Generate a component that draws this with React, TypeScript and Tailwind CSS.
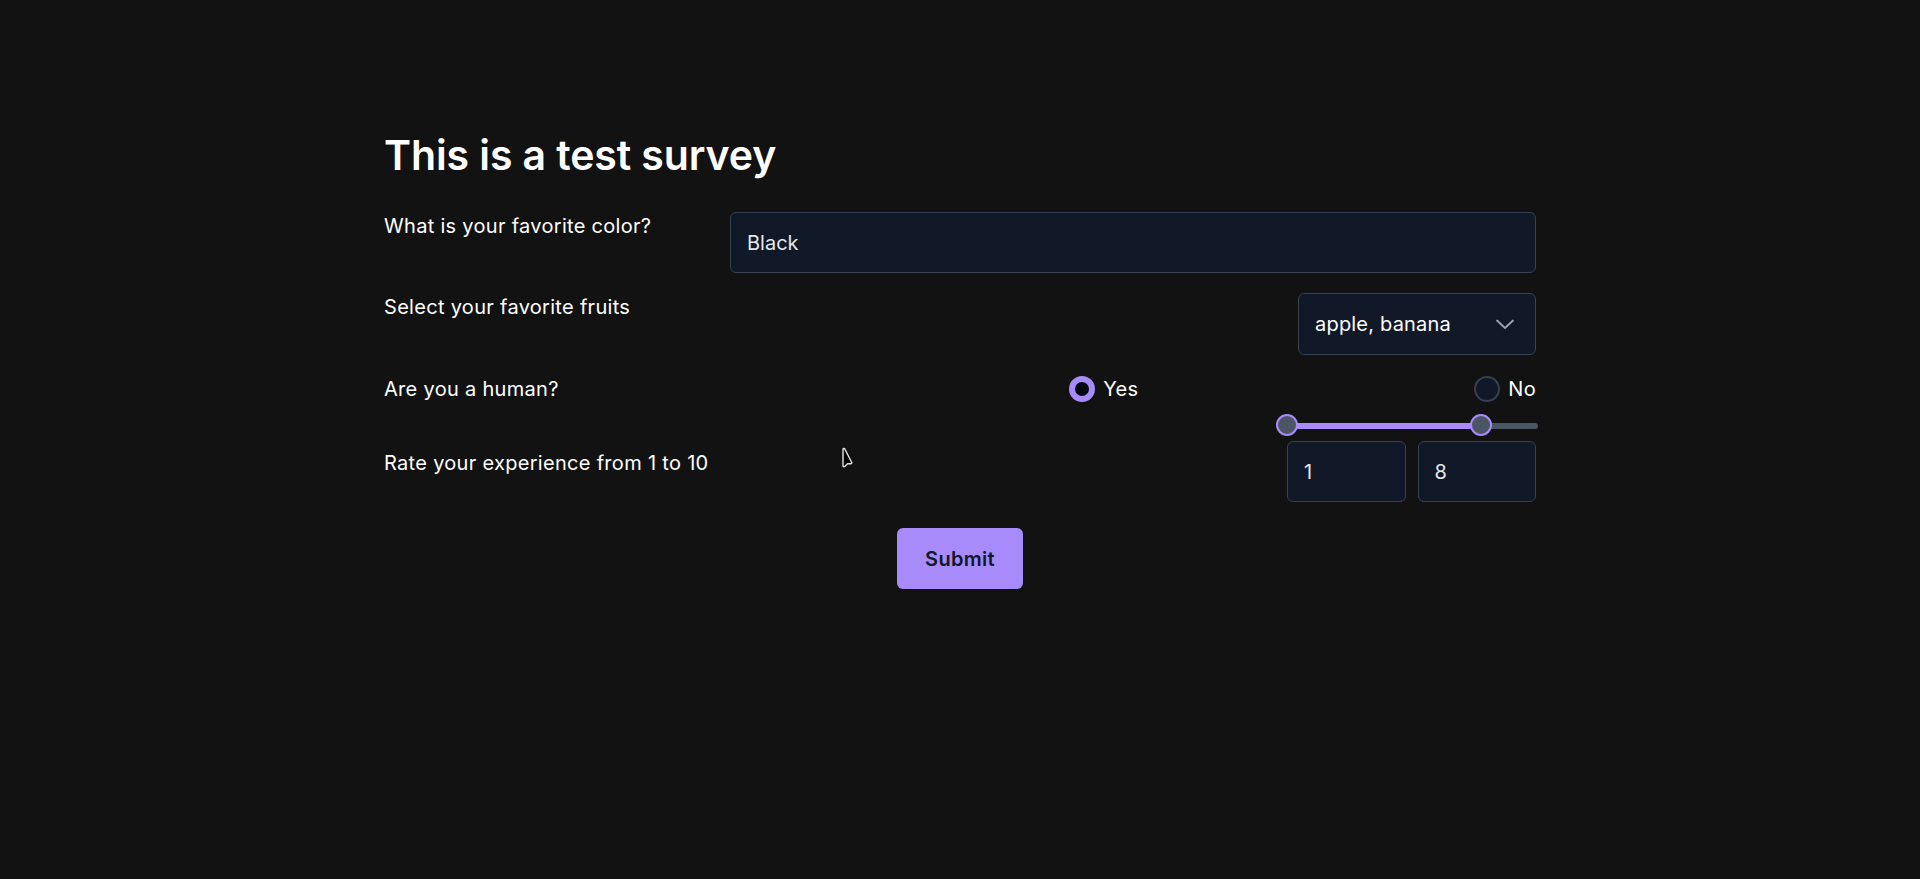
import { useState } from 'react';

const font = "font-['Inter',_'Liberation_Sans',_sans-serif]";

function ChevronDown() {
  return (
    <svg className="w-6 h-6 text-[#9ca3af]" viewBox="0 0 24 24" fill="none" stroke="currentColor" strokeWidth={1.8}>
      <path strokeLinecap="round" strokeLinejoin="round" d="M4 8.5l8 7.5 8-7.5" />
    </svg>
  );
}

function Radio({ label, checked }: { label: string; checked: boolean }) {
  return (
    <label className="flex items-center gap-2 cursor-pointer">
      {checked ? (
        <span className="w-[26px] h-[26px] rounded-full border-[6px] border-[#a78bfa] bg-[#030712]" />
      ) : (
        <span className="w-[26px] h-[26px] rounded-full border-2 border-[#374151] bg-[#111827]" />
      )}
      <span className="text-xl leading-7 tracking-[0.3px] text-white">{label}</span>
    </label>
  );
}

function RangeSlider({ min, max, low, high }: { min: number; max: number; low: number; high: number }) {
  const lo = ((low - min) / (max - min)) * 100;
  const hi = ((high - min) / (max - min)) * 100;
  return (
    <div className="relative h-[22px] w-full">
      <div className="absolute left-0 right-[-2px] top-[9px] h-[6px] rounded-full bg-[#4b5563]" />
      <div
        className="absolute top-[9px] h-[6px] bg-[#a78bfa]"
        style={{ left: `${lo}%`, width: `${hi - lo}%` }}
      />
      <span
        className="absolute top-0 w-[22px] h-[22px] -translate-x-1/2 rounded-full border-2 border-[#a78bfa] bg-[#4b5563]"
        style={{ left: `${lo}%` }}
      />
      <span
        className="absolute top-0 w-[22px] h-[22px] -translate-x-1/2 rounded-full border-2 border-[#a78bfa] bg-[#4b5563]"
        style={{ left: `${hi}%` }}
      />
    </div>
  );
}

export default function App() {
  const [color, setColor] = useState('Black');

  return (
    <div className={`relative min-h-screen bg-[#121212] text-white ${font}`}>
      <div className="mx-auto w-[1152px] pt-[131px]">
        <h1 className="text-[41px] leading-[48px] font-semibold tracking-[-0.1px] text-white">
          This is a test survey
        </h1>

        <form className="mt-[33px] flex flex-col" onSubmit={(e) => e.preventDefault()}>
          <div className="flex items-start">
            <label className="w-[346px] shrink-0 text-xl leading-7 tracking-[0.3px] text-white">
              What is your favorite color?
            </label>
            <input
              value={color}
              onChange={(e) => setColor(e.target.value)}
              className="flex-1 h-[61px] rounded-md border border-[#374151] bg-[#111827] px-4 text-xl text-[#e5e7eb] outline-none"
            />
          </div>

          <div className="mt-5 flex items-start justify-between">
            <label className="text-xl leading-7 tracking-[0.3px] text-white">Select your favorite fruits</label>
            <button
              type="button"
              className="flex w-[238px] h-[62px] items-center justify-between rounded-md border border-[#374151] bg-[#111827] pl-4 pr-[18px] text-xl tracking-[0.2px] text-white"
            >
              <span>apple, banana</span>
              <ChevronDown />
            </button>
          </div>

          <div className="mt-5 flex items-center">
            <label className="w-[346px] shrink-0 text-xl leading-7 tracking-[0.3px] text-white">Are you a human?</label>
            <div className="flex flex-1 items-center justify-end gap-[336px]">
              <Radio label="Yes" checked />
              <Radio label="No" checked={false} />
            </div>
          </div>

          <div className="mt-[11px] flex items-start justify-between">
            <label className="mt-[35px] text-xl leading-7 tracking-[0.3px] text-white">Rate your experience from 1 to 10</label>
            <div className="flex w-[249px] flex-col">
              <RangeSlider min={1} max={10} low={1} high={8} />
              <div className="mt-[5px] grid grid-cols-2 gap-3">
                <input
                  defaultValue="1"
                  className="h-[61px] w-full rounded-md border border-[#374151] bg-[#111827] px-4 text-xl text-[#e5e7eb] outline-none"
                />
                <input
                  defaultValue="8"
                  className="h-[61px] w-full rounded-md border border-[#374151] bg-[#111827] px-4 text-xl text-[#e5e7eb] outline-none"
                />
              </div>
            </div>
          </div>

          <button
            type="submit"
            className="mx-auto mt-[26px] w-[126px] h-[61px] rounded-md bg-[#a78bfa] text-xl font-semibold tracking-[0.3px] text-[#111827]"
          >
            Submit
          </button>
        </form>
      </div>

      <svg className="absolute left-[841px] top-[447px] w-[17px] h-[22px]" viewBox="0 0 17 22" fill="none">
        <path d="M2 2.5v16.2c0 .9 1 1.3 1.7.8l2.9-2.7 3.1-.1c.9 0 1.4-1 .8-1.7L3.7 1.8C3 1.1 2 1.5 2 2.5z" fill="#000" stroke="#e5e5e5" strokeWidth={1.4} strokeLinejoin="round" />
      </svg>
    </div>
  );
}
